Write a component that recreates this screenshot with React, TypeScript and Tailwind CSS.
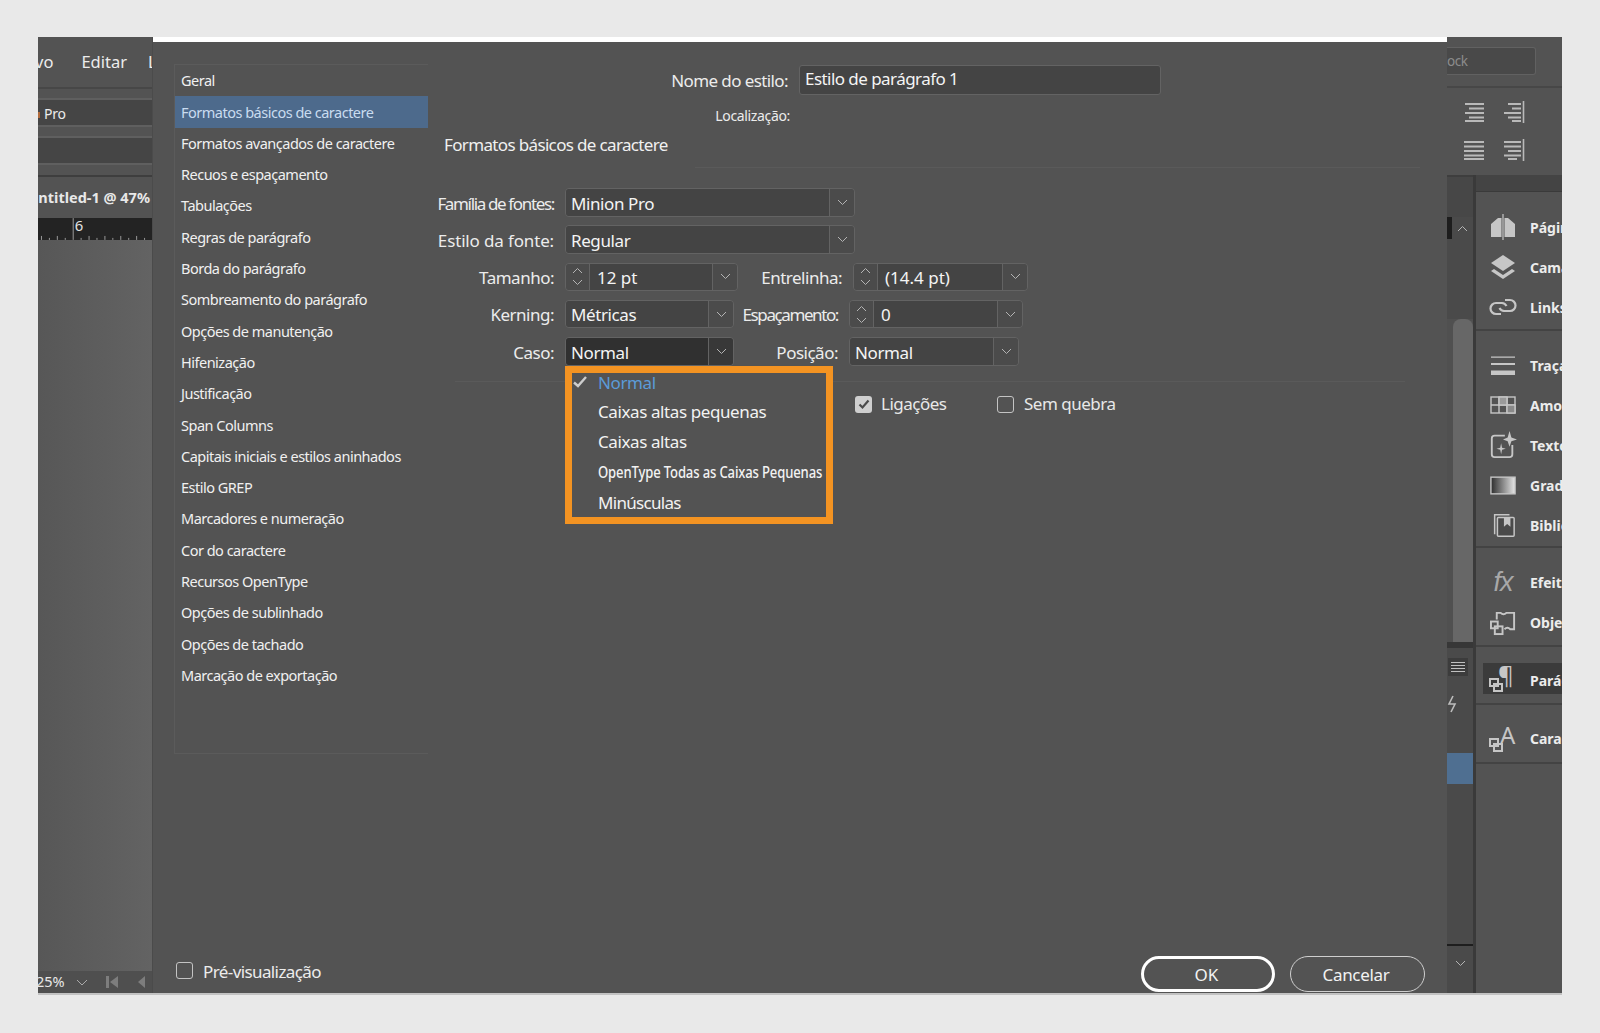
import type { ReactNode } from 'react';

const sections = [
  'Geral',
  'Formatos básicos de caractere',
  'Formatos avançados de caractere',
  'Recuos e espaçamento',
  'Tabulações',
  'Regras de parágrafo',
  'Borda do parágrafo',
  'Sombreamento do parágrafo',
  'Opções de manutenção',
  'Hifenização',
  'Justificação',
  'Span Columns',
  'Capitais iniciais e estilos aninhados',
  'Estilo GREP',
  'Marcadores e numeração',
  'Cor do caractere',
  'Recursos OpenType',
  'Opções de sublinhado',
  'Opções de tachado',
  'Marcação de exportação',
];

function Chevron({ up = false, className = 'w-[11px] h-[7px]' }: { up?: boolean; className?: string }) {
  return (
    <svg viewBox="0 0 11 7" className={className} fill="none" stroke="#b4b4b4" strokeWidth="1">
      <path d={up ? 'M1 6 L5.5 1.5 L10 6' : 'M1 1 L5.5 5.5 L10 1'} />
    </svg>
  );
}

function Field({
  value,
  width,
  spinner = false,
  dark = false,
}: {
  value: string;
  width: string;
  spinner?: boolean;
  dark?: boolean;
}) {
  const main = dark ? 'bg-[#303030]' : 'bg-[#444444]';
  const side = dark ? 'bg-[#383838]' : 'bg-[#4b4b4b]';
  const text = spinner ? 'pl-[7px]' : 'pl-[5px] tracking-[-0.4px]';
  return (
    <div className={`${width} h-full flex shrink-0 rounded-[4px] border-[1.5px] border-[#636363] overflow-hidden`}>
      {spinner && (
        <div className={`w-[24px] shrink-0 ${side} border-r-[1.5px] border-[#636363] flex flex-col items-center justify-center gap-[5px]`}>
          <Chevron up />
          <Chevron />
        </div>
      )}
      <div className={`flex-1 ${main} flex items-center ${text} pt-[2px] text-[17px] text-[#f4f4f4] whitespace-nowrap`}>{value}</div>
      <div className={`w-[25px] shrink-0 ${side} border-l-[1.5px] border-[#636363] flex items-center justify-center`}>
        <Chevron />
      </div>
    </div>
  );
}

function Label({ children, width, className = 'tracking-[-0.5px]' }: { children: ReactNode; width: string; className?: string }) {
  return (
    <div className={`${width} shrink-0 text-right text-[17px] pt-[2px] text-[#ececec] whitespace-nowrap ${className}`}>{children}</div>
  );
}

function CheckBox({ checked = false }: { checked?: boolean }) {
  if (checked) {
    return (
      <div className="w-[17px] h-[17px] rounded-[3px] bg-[#cfcfcf] flex items-center justify-center shrink-0">
        <svg viewBox="0 0 12 12" className="w-[12px] h-[12px]" fill="none" stroke="#4a4a4a" strokeWidth="2.2">
          <path d="M1.5 6.5 L4.5 9.5 L10.5 2.5" />
        </svg>
      </div>
    );
  }
  return <div className="w-[17px] h-[17px] rounded-[3px] border-[1.5px] border-[#c4c4c4] shrink-0" />;
}

function CaseMenu() {
  return (
    <div className="absolute left-0 top-[29px] w-[268px] h-[158px] border-[7px] border-[#f39322] bg-[#535353] text-[17px] tracking-[-0.4px] text-[#f2f2f2] whitespace-nowrap">
      <div className="h-[20px] flex items-center relative pl-[26px] text-[#5b9bd8]">
        <svg viewBox="0 0 14 12" className="absolute left-[1px] top-[3px] w-[14px] h-[12px]" fill="none" stroke="#cdcdcd" strokeWidth="2.4">
          <path d="M1 6.5 L5 10 L13 1" />
        </svg>
        Normal
      </div>
      <div className="h-[30px] mt-[4px] flex items-center pl-[26px]">Caixas altas pequenas</div>
      <div className="h-[30px] flex items-center pl-[26px]">Caixas altas</div>
      <div className="h-[30px] flex items-center pl-[26px]">
        <span className="origin-left scale-x-[0.77] inline-block font-medium tracking-[-0.2px]">OpenType Todas as Caixas Pequenas</span>
      </div>
      <div className="h-[30px] pt-px flex items-center pl-[26px] tracking-[-0.7px]">Minúsculas</div>
    </div>
  );
}

function Form() {
  return (
    <div className="flex-1 flex flex-col -mt-[22px]">
      <div className="mt-[23px] h-[30px] flex items-center gap-[11px]">
        <Label width="w-[360px]" className="tracking-[-0.6px]">Nome do estilo:</Label>
        <div className="w-[362px] h-full bg-[#444444] border-[1.5px] border-[#636363] rounded-[3px] flex items-center pl-[5px] pb-[2px] text-[17px] text-[#f4f4f4] tracking-[-0.55px]">
          Estilo de parágrafo 1
        </div>
      </div>
      <div className="mt-[7px] h-[26px] flex items-center">
        <div className="w-[362px] text-right text-[14px] tracking-[-0.35px] text-[#ececec]">Localização:</div>
      </div>
      <div className="mt-[3px] h-[28px] flex items-center pl-[16px] text-[17px] text-[#f0f0f0] tracking-[-0.65px]">Formatos básicos de caractere</div>
      <div className="mt-[8px] ml-[267px] w-[725px] h-px bg-[#5a5a5a]" />
      <div className="mt-[20px] flex flex-col gap-[8.75px]">
        <div className="h-[28.5px] flex items-center gap-[11px]">
          <Label width="w-[126px]" className="tracking-[-1.35px]">Família de fontes:</Label>
          <Field value="Minion Pro" width="w-[290px]" />
        </div>
        <div className="h-[28.5px] flex items-center gap-[11px]">
          <Label width="w-[126px]" className="tracking-[-0.15px]">Estilo da fonte:</Label>
          <Field value="Regular" width="w-[290px]" />
        </div>
        <div className="h-[28.5px] flex items-center gap-[11px]">
          <Label width="w-[126px]">Tamanho:</Label>
          <Field value="12 pt" width="w-[173px]" spinner />
          <Label width="w-[104px]" className="-ml-[11px] tracking-[-0.5px]">Entrelinha:</Label>
          <Field value="(14.4 pt)" width="w-[175px]" spinner />
        </div>
        <div className="h-[28.5px] flex items-center gap-[11px]">
          <Label width="w-[126px]">Kerning:</Label>
          <Field value="Métricas" width="w-[169px]" />
          <Label width="w-[104px]" className="-ml-[11px] tracking-[-1.4px]">Espaçamento:</Label>
          <Field value="0" width="w-[174px]" spinner />
        </div>
        <div className="h-[28.5px] flex items-center gap-[11px]">
          <Label width="w-[126px]">Caso:</Label>
          <div className="relative h-full">
            <Field value="Normal" width="w-[169px]" dark />
            <CaseMenu />
          </div>
          <Label width="w-[104px]" className="-ml-[11px] tracking-[-0.5px]">Posição:</Label>
          <Field value="Normal" width="w-[170px]" />
        </div>
      </div>
      <div className="mt-[15.5px] ml-[27px] w-[950px] h-px bg-[#5a5a5a]" />
      <div className="mt-[12px] ml-[427px] flex items-center h-[20px] text-[17px] text-[#e8e8e8] tracking-[-0.5px]">
        <div className="w-[142px] flex items-center gap-[9px]">
          <CheckBox checked />
          Ligações
        </div>
        <div className="flex items-center gap-[10px]">
          <CheckBox />
          Sem quebra
        </div>
      </div>
    </div>
  );
}

function Dialog() {
  return (
    <div className="w-[1294px] shrink-0 bg-[#535353] border-t-[5px] border-white flex flex-col">
      <div className="flex pt-[22px] pl-[21px]">
        <div className="w-[254px] h-[690px] shrink-0 border border-[#5b5b5b] border-r-0 text-[14.5px] text-[#f0f0f0] tracking-[-0.5px]">
          {sections.map((s, i) => (
            <div
              key={s}
              className={`h-[31.3px] pt-px flex items-center pl-[6px] whitespace-nowrap ${i === 1 ? 'bg-[#4d6a8c] text-[#c9dcf0]' : ''}`}
            >
              {s}
            </div>
          ))}
        </div>
        <Form />
      </div>
      <div className="flex-1 flex items-end pl-[23px] pr-[22px] pb-px">
        <div className="flex-1 flex items-center gap-[10px] mb-[8px] text-[17px] text-[#ececec] tracking-[-0.6px]">
          <CheckBox />
          <span className="pt-[2px]">Pré-visualização</span>
        </div>
        <div className="w-[134px] h-[36px] pt-px pr-[3px] rounded-full border-[3px] border-white flex items-center justify-center text-[17px] text-[#f2f2f2]">OK</div>
        <div className="ml-[15px] w-[135px] h-[36px] pt-px pr-[3px] rounded-full border border-[#cfcfcf] flex items-center justify-center text-[17px] tracking-[-0.3px] text-[#f2f2f2]">Cancelar</div>
      </div>
    </div>
  );
}

function LeftApp() {
  return (
    <div className="w-[115px] shrink-0 flex flex-col bg-[#535353] border-r border-[#4b4b4b]">
      <div className="h-[52px] pt-px border-b-2 border-[#474747] flex items-center text-[16.5px] text-[#ececec] overflow-hidden shrink-0 whitespace-nowrap">
        <span className="-ml-[3px]">vo</span>
        <span className="ml-[28px]">Editar</span>
        <span className="ml-[21px]">L</span>
      </div>
      <div className="mt-[9px] h-[29px] border-y-2 border-[#5f5f5f] bg-[#454545] flex items-center text-[14px] tracking-[-0.2px] text-[#ececec] shrink-0 pt-px">
        <div className="w-[2px] h-[6px] mt-[3px] mr-[4px] bg-[#b06a3c]" />
        Pro
      </div>
      <div className="mt-[9px] h-[29px] border-y-2 border-[#5f5f5f] bg-[#454545] shrink-0" />
      <div className="mt-[10px] h-[2px] bg-[#3e3e3e] shrink-0" />
      <div className="h-[41px] flex items-center justify-end pr-[2px] font-bold text-[14.5px] text-[#e8e8e8] whitespace-nowrap overflow-hidden shrink-0">
        ntitled-1 @ 47%
      </div>
      <svg viewBox="0 0 115 22" className="w-[114px] h-[22px] shrink-0 bg-[#232323]" stroke="#9a9a9a" strokeWidth="1" fill="none">
        <path d="M35.5 0V22M3.5 18V22M11.5 20V22M19.5 18V22M27.5 20V22M43.5 20V22M51.5 18V22M59.5 20V22M67.5 18V22M75.5 20V22M83.5 18V22M91.5 20V22M99.5 18V22M107.5 20V22" />
        <text x="37" y="13" fill="#e4e4e4" stroke="none" fontSize="15" fontFamily="Noto Sans">6</text>
      </svg>
      <div className="flex-1 bg-gradient-to-r from-[#575757] to-[#636363]" />
      <div className="h-[22px] shrink-0 bg-[#4f4f4f] flex items-center text-[14.5px] text-[#e8e8e8]">
        <span className="-ml-[2px]">25%</span>
        <svg viewBox="0 0 12 7" className="ml-[11px] w-[12px] h-[7px]" fill="none" stroke="#aaaaaa" strokeWidth="1">
          <path d="M1 1 L6 6 L11 1" />
        </svg>
        <svg viewBox="0 0 12 12" className="ml-[18px] w-[12px] h-[12px]" fill="#7d7d7d">
          <path d="M0 0H3V12H0ZM4 6L12 0V12Z" />
        </svg>
        <svg viewBox="0 0 7 12" className="ml-[20px] w-[7px] h-[12px]" fill="#7d7d7d">
          <path d="M0 6L7 0V12Z" />
        </svg>
      </div>
    </div>
  );
}

function AlignIcon({ lines, bar = false }: { lines: string; bar?: boolean }) {
  return (
    <svg viewBox="0 0 22 22" className="w-[22px] h-[22px]" fill="none" stroke="#b9b9b9" strokeWidth="1.8">
      <path d={lines} />
      {bar && <path d="M20.5 0V22" strokeWidth="1.6" />}
    </svg>
  );
}

const stroke = '#c6c6c6';

const panelIcons: Record<string, ReactNode> = {
  pages: (
    <svg viewBox="0 0 28 28" className="w-[28px] h-[28px]" fill={stroke}>
      <path d="M2 11 L9 5 H12.5 V24 H2ZM15.5 5 H19 L26 11 V24 H15.5Z" />
      <path d="M14 1V27" stroke={stroke} strokeWidth="1.2" />
    </svg>
  ),
  layers: (
    <svg viewBox="0 0 28 28" className="w-[28px] h-[28px]" fill={stroke}>
      <path d="M14 2 L26 10 L14 18 L2 10Z" />
      <path d="M5 16 L14 22 L23 16 L26 18 L14 26 L2 18Z" />
    </svg>
  ),
  links: (
    <svg viewBox="0 0 28 28" className="w-[28px] h-[28px]" fill="none" stroke={stroke} strokeWidth="2.2">
      <path d="M12 21H7a5.5 5.5 0 0 1 0-11h6a5.5 5.5 0 0 1 4.5 3" />
      <path d="M16 7h5a5.5 5.5 0 0 1 0 11h-6a5.5 5.5 0 0 1-4.5-3" />
    </svg>
  ),
  strokes: (
    <svg viewBox="0 0 28 28" className="w-[28px] h-[28px]" fill={stroke}>
      <path d="M2 5.5H26V6.8H2ZM2 12H26V14H2ZM2 19.5H26V24H2Z" />
    </svg>
  ),
  swatches: (
    <svg viewBox="0 0 28 28" className="w-[28px] h-[28px]" fill="none" stroke={stroke} strokeWidth="1.4">
      <rect x="2" y="6" width="24" height="16" />
      <path d="M2 14H26M10 6V22M18 6V22" />
      <rect x="10" y="6" width="8" height="8" fill="#9a9a9a" />
      <rect x="18" y="14" width="8" height="8" fill="#8a8a8a" />
    </svg>
  ),
  textStyle: (
    <svg viewBox="0 0 30 30" className="w-[30px] h-[30px]" fill={stroke}>
      <path d="M17 5H6a3 3 0 0 0-3 3V25a3 3 0 0 0 3 3H22a3 3 0 0 0 3-3V15" fill="none" stroke={stroke} strokeWidth="2" />
      <path d="M22 0 L24 7 L30 9 L24 11 L22 17 L20 11 L15 9 L20 7Z" />
      <path d="M13 13 L14 18 L18 19 L14 20 L13 25 L12 20 L8 19 L12 18Z" />
    </svg>
  ),
  gradient: (
    <svg viewBox="0 0 28 20" className="w-[26px] h-[19px]">
      <defs>
        <linearGradient id="grad-swatch">
          <stop offset="0" stopColor="#2c2c2c" />
          <stop offset="1" stopColor="#e6e6e6" />
        </linearGradient>
      </defs>
      <rect x="1" y="1" width="26" height="18" fill="url(#grad-swatch)" stroke={stroke} strokeWidth="1.5" />
    </svg>
  ),
  library: (
    <svg viewBox="0 0 28 28" className="w-[26px] h-[26px]" fill="none" stroke={stroke} strokeWidth="1.6">
      <path d="M5 24V3H21" />
      <rect x="8" y="6" width="18" height="20" rx="1" fill="#4a4a4a" />
      <path d="M15 6H22V16L18.5 13L15 16Z" fill={stroke} stroke="none" />
    </svg>
  ),
  fx: <span className="font-['Liberation_Sans',sans-serif] italic text-[27px] leading-none tracking-[-1px] text-[#a8a8a8]">fx</span>,
  objects: (
    <svg viewBox="0 0 28 28" className="w-[27px] h-[27px]" fill="none" stroke={stroke} strokeWidth="2">
      <path d="M7 11V4H11Q14 7 17 4H25V21H21Q18 18 15 21" />
      <rect x="1" y="13" width="7" height="7" />
      <rect x="5" y="18" width="8" height="8" />
    </svg>
  ),
  paragraph: (
    <svg viewBox="0 0 28 28" className="w-[28px] h-[28px]" fill="none" stroke={stroke} strokeWidth="2">
      <text x="9" y="19" fontSize="24" fontFamily="Noto Sans" fill={stroke} stroke="none">¶</text>
      <rect x="1" y="14" width="8" height="7" />
      <rect x="5" y="19" width="8" height="7" />
    </svg>
  ),
  character: (
    <svg viewBox="0 0 28 28" className="w-[28px] h-[28px]" fill="none" stroke={stroke} strokeWidth="2">
      <text x="11" y="20" fontSize="24" fontFamily="Noto Sans" fill={stroke} stroke="none">A</text>
      <rect x="1" y="15" width="8" height="7" />
      <rect x="5" y="20" width="8" height="7" />
    </svg>
  ),
};

function PanelRow({ icon, label, active = false }: { icon: string; label: string; active?: boolean }) {
  return (
    <div className={`flex items-center whitespace-nowrap overflow-hidden ${active ? 'ml-[7px] h-[31px] bg-[#3b3b3b] pl-[6px]' : 'h-[40px] pl-[13px]'}`}>
      <div className="w-[28px] h-[30px] shrink-0 flex items-center justify-center">{panelIcons[icon]}</div>
      <span className={`ml-[13px] font-bold text-[14px] text-[#ececec] ${active ? 'pt-[3px]' : ''}`}>{label}</span>
    </div>
  );
}

function RightApp() {
  return (
    <div className="w-[115px] shrink-0 flex flex-col bg-[#535353]">
      <div className="h-[51px] shrink-0 border-b-2 border-[#474747] pt-[10px]">
        <div className="w-[89px] h-[28px] bg-[#494949] border-[1.5px] border-l-0 border-[#616161] rounded-r-[3px] flex items-center text-[13.5px] tracking-[-0.4px] text-[#8c8c8c]">ock</div>
      </div>
      <div className="h-[87px] shrink-0 pt-[13px] pl-[16px] grid grid-cols-[22px_22px] gap-x-[18px] gap-y-[16px] content-start">
        <AlignIcon lines="M2 3H21M6 7.5H21M2 12H21M6 16.5H21M2 20H21" />
        <AlignIcon lines="M5 3H18M9 7.5H18M1 12H18M5 16.5H18M9 20H18" bar />
        <AlignIcon lines="M1 3H21M1 7.5H21M1 12H21M1 16.5H21M1 20H21" />
        <AlignIcon lines="M1 3H18M1 7.5H18M5 12H18M1 16.5H18M5 20H14" bar />
      </div>
      <div className="flex-1 flex min-h-0">
        <div className="w-[26px] shrink-0 flex flex-col bg-[#4a4a4a] border-t-2 border-[#3e3e3e]">
          <div className="h-[40px] bg-[#474747] shrink-0" />
          <div className="h-[102px] shrink-0 flex">
            <div className="w-[5px] h-[22px] bg-[#1d1d1d]" />
            <div className="flex-1 flex justify-center pt-[8px]">
              <Chevron up />
            </div>
          </div>
          <div className="h-[323px] shrink-0 bg-[#505050] pl-[6px]">
            <div className="h-full bg-[#676767] rounded-t-[8px]" />
          </div>
          <div className="h-[6px] bg-[#373737] shrink-0" />
          <div className="h-[38px] shrink-0 flex items-center pl-px">
            <div className="w-[20px] h-[18px] bg-[#3c3c3c] flex flex-col justify-center gap-[2px] px-[3px]">
              <div className="h-px bg-[#c0c0c0]" />
              <div className="h-px bg-[#c0c0c0]" />
              <div className="h-px bg-[#c0c0c0]" />
              <div className="h-px bg-[#c0c0c0]" />
            </div>
          </div>
          <div className="h-[36px] shrink-0 flex items-center">
            <svg viewBox="0 0 10 18" className="w-[10px] h-[18px]" fill="none" stroke="#bdbdbd" strokeWidth="1.6">
              <path d="M6 1 L2 9 H8 L4 17" />
            </svg>
          </div>
          <div className="h-[31px] shrink-0" />
          <div className="h-[31px] shrink-0 bg-[#4f6f91]" />
          <div className="h-[162px] shrink-0 border-b-2 border-[#1e1e1e]" />
          <div className="flex-1 flex flex-col items-center justify-end pb-[26px]">
            <Chevron />
          </div>
        </div>
        <div className="w-[3px] shrink-0 bg-[#3a3a3a]" />
        <div className="flex-1 min-w-0 flex flex-col">
          <div className="h-[17px] shrink-0 bg-[#444444] border-b border-[#3a3a3a]" />
          <div className="h-[139px] shrink-0 pt-[15px] border-b-2 border-[#434343]">
            <PanelRow icon="pages" label="Páginas" />
            <PanelRow icon="layers" label="Camadas" />
            <PanelRow icon="links" label="Links" />
          </div>
          <div className="h-[217px] shrink-0 pt-[14px] border-b-2 border-[#434343]">
            <PanelRow icon="strokes" label="Traçado" />
            <PanelRow icon="swatches" label="Amostras" />
            <PanelRow icon="textStyle" label="Texto" />
            <PanelRow icon="gradient" label="Gradiente" />
            <PanelRow icon="library" label="Bibliotecas" />
          </div>
          <div className="h-[99px] shrink-0 pt-[14px] border-b-2 border-[#434343]">
            <PanelRow icon="fx" label="Efeitos" />
            <PanelRow icon="objects" label="Objetos" />
          </div>
          <div className="h-[58px] shrink-0 pt-[16px] border-b-2 border-[#434343]">
            <PanelRow icon="paragraph" label="Parágrafo" active />
          </div>
          <div className="h-[59px] shrink-0 pt-[13px] border-b-2 border-[#434343]">
            <PanelRow icon="character" label="Caractere" />
          </div>
        </div>
      </div>
    </div>
  );
}

export default function App() {
  return (
    <div className="w-full h-[1033px] bg-[#e9e9e9] pt-[37px] pl-[38px] font-['Noto_Sans',sans-serif]">
      <div className="w-[1524px] h-[958px] flex border-b-2 border-[#c2c2c2]">
        <LeftApp />
        <Dialog />
        <RightApp />
      </div>
    </div>
  );
}
